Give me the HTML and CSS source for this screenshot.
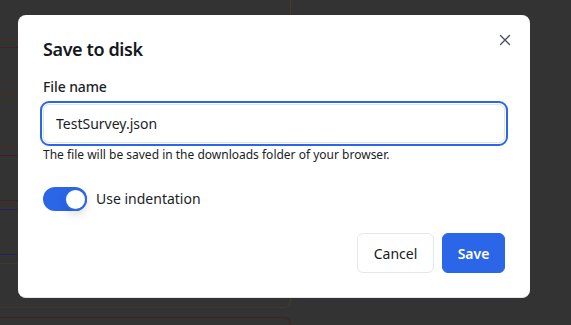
FILE: index.html
```html
<!DOCTYPE html>
<html lang="en">
<head>
<meta charset="utf-8">
<title>Save to disk</title>
<link rel="stylesheet" href="styles.css">
</head>
<body>
<div class="backdrop">
  <div class="bg-panel">
    <div class="bg-row r1"></div>
    <div class="bg-row r2"></div>
    <div class="bg-row r3"></div>
    <div class="bg-row r4"></div>
    <div class="bg-row r5"></div>
    <div class="bg-row r6"></div>
  </div>
  <div class="bg-panel2"></div>
</div>

<div class="dialog" role="dialog" aria-labelledby="dlg-title">
  <button class="close" aria-label="Close">
    <svg width="12" height="12" viewBox="0 0 12 12"><path d="M1.5 1.5 L10.5 10.5 M10.5 1.5 L1.5 10.5" stroke="#4b5060" stroke-width="1.4" stroke-linecap="round" fill="none"/></svg>
  </button>
  <h2 id="dlg-title" class="title">Save to disk</h2>
  <label class="label" for="fname">File name</label>
  <input id="fname" class="input" type="text" value="TestSurvey.json">
  <p class="hint">The file will be saved in the downloads folder of your browser.</p>
  <div class="toggle-row">
    <span class="toggle"><span class="knob"></span></span>
    <span class="toggle-label">Use indentation</span>
  </div>
  <div class="actions">
    <button class="btn btn-secondary">Cancel</button>
    <button class="btn btn-primary">Save</button>
  </div>
</div>
</body>
</html>
```
FILE: styles.css
```css
* { box-sizing: border-box; }
html, body { margin: 0; padding: 0; }
body {
  width: 571px;
  height: 325px;
  overflow: hidden;
  background: #333333;
  font-family: "Noto Sans", "Open Sans", sans-serif;
  color: #161a23;
}

.backdrop {
  display: flex;
  flex-direction: column;
  gap: 9px;
  margin-top: -8px;
}
.bg-panel {
  width: 291px;
  height: 316px;
  border-right: 1px solid #4a3a22;
  border-bottom: 1px solid #3c3d22;
  border-bottom-right-radius: 7px;
  display: flex;
  flex-direction: column;
  gap: 8px;
}
.bg-row {
  height: 46px;
  border-top: 1px solid transparent;
  border-bottom: 1px solid #4a2e1a;
}
.r1 { height: 47px; border-top: none; border-bottom-color: #4b2c1a; }
.r2 { border-top-color: #43221f; border-bottom-color: #4b2c1a; }
.r3 { border-top-color: #2f3a22; border-bottom-color: #4b2c1a; }
.r4 { border-top-color: #3e2030; border-bottom-color: #4a1e22; }
.r5 { border-top-color: #26245a; border-bottom-color: #252460; }
.r6 { border-top-color: #3a3d22; border-bottom: none; height: 44px; }
.bg-panel2 {
  width: 291px;
  height: 8px;
  border-top: 1px solid #4a1e1e;
  border-right: 1px solid #4a1e1e;
  border-top-right-radius: 7px;
}

.dialog {
  position: fixed;
  left: 18px;
  top: 15px;
  width: 512px;
  height: 283px;
  background: #ffffff;
  border-radius: 8px;
  border-bottom: 1px solid #e3e6ee;
  padding: 22px 25px 24px 25px;
  display: flex;
  flex-direction: column;
}

.close {
  position: absolute;
  right: 19px;
  top: 19px;
  width: 12px;
  height: 12px;
  padding: 0;
  border: 0;
  background: transparent;
  display: flex;
}

.title {
  margin: 0;
  font-size: 18px;
  line-height: 24px;
  font-weight: 600;
  letter-spacing: -0.4px;
  color: #141821;
}

.label {
  margin-top: 16px;
  font-size: 14px;
  line-height: 20px;
  font-weight: 500;
  letter-spacing: -0.1px;
  color: #1c1f28;
}

.input {
  margin: 7px 0 0 0;
  width: 100%;
  height: 40px;
  border: 1px solid #dfe4ee;
  border-radius: 6px;
  outline: 2px solid #2b66e8;
  outline-offset: 1px;
  padding: 0 12px;
  font-family: inherit;
  font-size: 14px;
  color: #1a1d26;
  background: #fff;
}

.hint {
  margin: 4px 0 0 0;
  font-size: 12px;
  line-height: 16px;
  color: #1a1d26;
}

.toggle-row {
  margin-top: 24px;
  height: 24px;
  display: flex;
  align-items: center;
  gap: 9px;
}
.toggle {
  width: 44px;
  height: 24px;
  border-radius: 12px;
  background: #2b66e8;
  display: flex;
  justify-content: flex-end;
  align-items: center;
}
.knob {
  width: 23px;
  height: 23px;
  border-radius: 50%;
  background: #fff;
  border: 2px solid #2b66e8;
  box-shadow: 0 4px 8px rgba(0,0,0,0.12);
}
.toggle-label {
  font-size: 14px;
  line-height: 20px;
  color: #1a1d26;
}

.actions {
  margin-top: 22px;
  display: flex;
  justify-content: flex-end;
  gap: 8px;
}
.btn {
  height: 40px;
  border-radius: 6px;
  font-family: inherit;
  font-size: 14px;
  padding: 0;
  cursor: pointer;
}
.btn-secondary {
  background: #fff;
  border: 1px solid #e3e7ef;
  color: #161a23;
  width: 77px;
}
.btn-primary {
  background: #2b66e8;
  border: 1px solid #2b66e8;
  color: #fff;
  font-weight: 600;
  width: 63px;
}
```
